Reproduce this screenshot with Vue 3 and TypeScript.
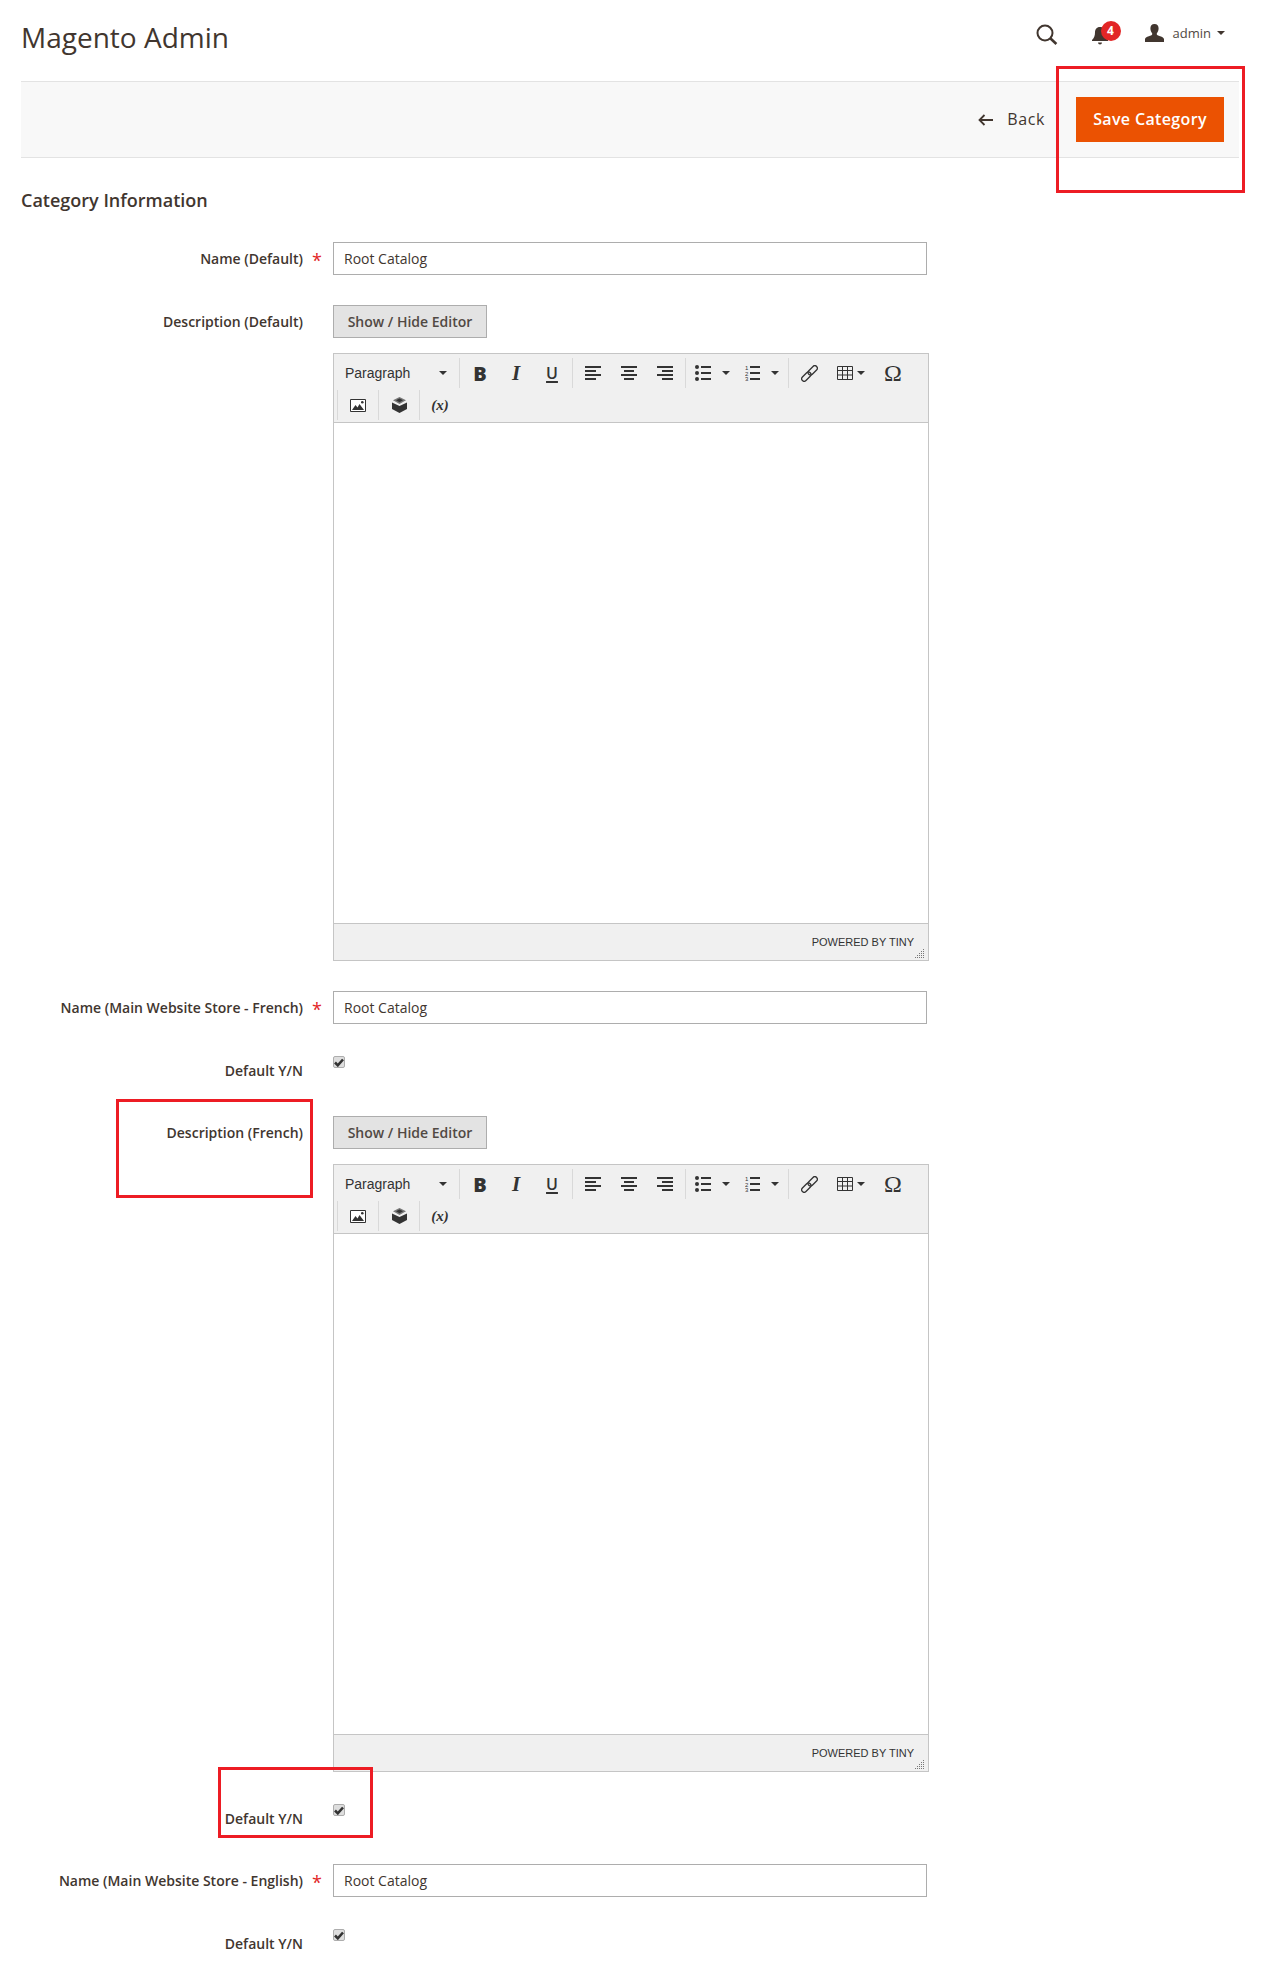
<script setup lang="ts">
interface Field {
  type: 'input' | 'editor' | 'check'
  label: string
  required?: boolean
}

const fields: Field[] = [
  { type: 'input', label: 'Name (Default)', required: true },
  { type: 'editor', label: 'Description (Default)' },
  { type: 'input', label: 'Name (Main Website Store - French)', required: true },
  { type: 'check', label: 'Default Y/N' },
  { type: 'editor', label: 'Description (French)' },
  { type: 'check', label: 'Default Y/N' },
  { type: 'input', label: 'Name (Main Website Store - English)', required: true },
  { type: 'check', label: 'Default Y/N' },
]
</script>

<template>
  <div class="page">
    <header class="top">
      <h1 class="title">Magento Admin</h1>
      <div class="top-actions">
        <svg class="ic-search" width="22" height="21" viewBox="0 0 22 21">
          <circle cx="9" cy="9" r="7.5" fill="none" stroke="#41362f" stroke-width="2" />
          <path d="M14 14l6.400 6" stroke="#41362f" stroke-width="2.600" fill="none" />
        </svg>
        <div class="bell">
          <svg width="18" height="19" viewBox="0 0 18 19">
            <path d="M9 1c-3.600 0-5 2.600-5 5.600 0 3.400-1 5.400-3 7.400v1h16v-1c-2-2-3-4-3-7.400C14 3.600 12.600 1 9 1z" fill="#41362f" />
            <path d="M7 16.500h4a2 2 0 0 1-4 0z" fill="#41362f" />
          </svg>
          <span class="badge">4</span>
        </div>
        <svg class="ic-user" width="19" height="18" viewBox="0 0 19 18">
          <path d="M9.500 0C6.700 0 5.300 2 5.400 4.600c.1 2 .8 3.500 1.700 4.700.3.500.2 1.300-.3 1.600C4.900 12 .6 12.600 0 15v3h19v-3c-.6-2.400-4.900-3-6.800-4.100-.5-.3-.6-1.100-.3-1.600.9-1.200 1.600-2.700 1.700-4.700C13.700 2 12.300 0 9.500 0z" fill="#41362f" />
        </svg>
        <span class="admin">admin</span>
        <span class="caret admin-caret"></span>
      </div>
    </header>

    <div class="toolbar">
      <svg width="15" height="12" viewBox="0 0 15 12">
        <path d="M6.500 1L1.500 6l5 5M1.500 6H15" fill="none" stroke="#41362f" stroke-width="1.800" />
      </svg>
      <span class="back">Back</span>
      <button class="save"><span>Save Category</span></button>
    </div>

    <h2 class="section">Category Information</h2>

    <div v-for="(f, i) in fields" :key="i" class="row" :class="'row-' + f.type">
      <label class="label">{{ f.label }}</label>
      <span class="req"><template v-if="f.required">*</template></span>

      <div v-if="f.type === 'input'" class="text-input">Root Catalog</div>

      <span v-else-if="f.type === 'check'" class="checkbox">
        <svg width="10" height="9" viewBox="0 0 10 9">
          <path d="M1 4.500l2.800 2.800L9 1.500" fill="none" stroke="#333" stroke-width="2.600" />
        </svg>
      </span>

      <div v-else class="editor-wrap">
        <button class="toggle">Show / Hide Editor</button>
        <div class="editor">
          <div class="mce-bar">
            <div class="mce-row">
              <div class="mce-format">
                <span>Paragraph</span>
                <span class="caret"></span>
              </div>
              <div class="mce-group">
                <span class="mce-btn g-bold">B</span>
                <span class="mce-btn g-ital">I</span>
                <span class="mce-btn g-under">U</span>
              </div>
              <div class="mce-group">
                <span class="mce-btn">
                  <svg width="16" height="14" viewBox="0 0 16 14"><path d="M0 1h16M0 5h11M0 9h16M0 13h11" stroke="#333" stroke-width="2" /></svg>
                </span>
                <span class="mce-btn">
                  <svg width="16" height="14" viewBox="0 0 16 14"><path d="M0 1h16M3 5h10M0 9h16M3 13h10" stroke="#333" stroke-width="2" /></svg>
                </span>
                <span class="mce-btn">
                  <svg width="16" height="14" viewBox="0 0 16 14"><path d="M0 1h16M5 5h11M0 9h16M5 13h11" stroke="#333" stroke-width="2" /></svg>
                </span>
              </div>
              <div class="mce-group">
                <span class="mce-split">
                  <svg width="16" height="16" viewBox="0 0 16 16">
                    <circle cx="2" cy="2" r="2" fill="#333" /><circle cx="2" cy="8" r="2" fill="#333" /><circle cx="2" cy="14" r="2" fill="#333" />
                    <path d="M6 2h10M6 8h10M6 14h10" stroke="#333" stroke-width="2" />
                  </svg>
                  <span class="caret"></span>
                </span>
                <span class="mce-split mce-num">
                  <svg class="num-ic" width="15" height="16" viewBox="0 0 15 16">
                    <path d="M5 2h10M5 8h10M5 14h10" stroke="#333" stroke-width="2" />
                    <text x="0" y="5">1</text>
                    <text x="0" y="11">2</text>
                    <text x="0" y="16">3</text>
                  </svg>
                  <span class="caret"></span>
                </span>
              </div>
              <div class="mce-group">
                <span class="mce-btn">
                  <svg width="17" height="17" viewBox="0 0 17 17">
                    <g transform="rotate(-45 8.500 8.500)" fill="none" stroke="#333" stroke-width="1.300">
                      <rect x="-1.500" y="6" width="11" height="5" rx="2.500" />
                      <rect x="7.500" y="6" width="11" height="5" rx="2.500" />
                    </g>
                  </svg>
                </span>
                <span class="mce-split mce-table">
                  <svg width="16" height="14" viewBox="0 0 16 14">
                    <path d="M.5.500h15v13H.5zM.5 4.500h15M.5 9h15M5.500.500v13M10.500.500v13" fill="none" stroke="#333" stroke-width="1" />
                  </svg>
                  <span class="caret"></span>
                </span>
                <span class="mce-btn g-omega">Ω</span>
              </div>
            </div>
            <div class="mce-row mce-row2">
              <div class="mce-group">
                <span class="mce-btn">
                  <svg width="16" height="13" viewBox="0 0 16 13">
                    <path d="M.5.500h15v12H.5z" fill="#fff" stroke="#333" />
                    <path d="M2 11l3.500-5 2 2.500L9.500 5 14 11z" fill="#333" />
                    <circle cx="12.300" cy="3.300" r="1.300" fill="#333" />
                  </svg>
                </span>
              </div>
              <div class="mce-group">
                <span class="mce-btn">
                  <svg width="15" height="16" viewBox="0 0 15 16">
                    <path d="M0 5.500l7.500 3.500L15 5.500V12l-7.500 4L0 12z" fill="#333" />
                    <path d="M7.500 0L14 3.200 7.500 7 1 3.200z" fill="#777" />
                    <path d="M4 3.200l3.500-1.700 3.500 1.700-3.500 2z" fill="#333" />
                  </svg>
                </span>
              </div>
              <div class="mce-group">
                <span class="mce-btn g-var">(x)</span>
              </div>
            </div>
          </div>
          <div class="mce-body"></div>
          <div class="mce-status">
            <span>POWERED BY TINY</span>
            <svg class="grip" width="10" height="10" viewBox="0 0 10 10">
              <path d="M8 1h1v1H8zM6 3h1v1H6zM8 3h1v1H8zM4 5h1v1H4zM6 5h1v1H6zM8 5h1v1H8zM2 7h1v1H2zM4 7h1v1H4zM6 7h1v1H6zM8 7h1v1H8zM0 9h1v1H0zM2 9h1v1H2zM4 9h1v1H4zM6 9h1v1H6zM8 9h1v1H8z" fill="#777" />
            </svg>
          </div>
        </div>
      </div>
    </div>

    <div class="mark mark-save"></div>
    <div class="mark mark-desc"></div>
    <div class="mark mark-check"></div>
  </div>
</template>

<style scoped>
.page {
  position: relative;
  width: 1267px;
  height: 1987px;
  overflow: hidden;
  background: #fff;
  color: #303030;
  font-family: "Open Sans", sans-serif;
  font-size: 14px;
}

.top {
  height: 81px;
  display: flex;
  justify-content: space-between;
  padding: 0 42px 0 21px;
  box-sizing: border-box;
}

.title {
  margin: 15px 0 0;
  font-size: 28px;
  line-height: 44px;
  font-weight: 400;
  color: #41362f;
}

.top-actions {
  display: flex;
  align-items: flex-start;
  padding-top: 24px;
}

.bell {
  position: relative;
  margin-left: 33px;
  padding-top: 2px;
  width: 18px;
  height: 19px;
}

.badge {
  position: absolute;
  left: 10px;
  top: -3px;
  width: 20px;
  height: 20px;
  border-radius: 50%;
  background: #e22626;
  color: #fff;
  font-size: 12px;
  font-weight: 700;
  line-height: 20px;
  text-align: center;
}

.ic-user {
  margin-left: 36px;
}

.admin {
  margin-left: 9px;
  font-size: 13px;
  line-height: 18px;
  color: #514943;
}

.caret {
  display: inline-block;
  width: 0;
  height: 0;
  border-left: 4px solid transparent;
  border-right: 4px solid transparent;
  border-top: 4px solid #41362f;
}

.admin-caret {
  margin: 7px 0 0 6px;
}

.toolbar {
  height: 77px;
  margin: 0 28px 0 21px;
  padding-right: 15px;
  box-sizing: border-box;
  background: #f8f8f8;
  border-top: 1px solid #e3e3e3;
  border-bottom: 1px solid #e3e3e3;
  display: flex;
  align-items: center;
  justify-content: flex-end;
}

.back {
  margin: 0 0 2px 14px;
  font-size: 16px;
  letter-spacing: .6px;
  color: #41362f;
}

.save {
  margin-left: 31px;
  width: 148px;
  height: 45px;
  border: 0;
  padding: 0 0 2px;
  background: #eb5202;
  color: #fff;
  font-family: inherit;
  font-size: 16px;
  font-weight: 600;
  letter-spacing: .35px;
}

.section {
  margin: 0;
  padding-top: 30px;
  height: 84px;
  box-sizing: border-box;
  padding-left: 21px;
  font-size: 18px;
  line-height: 25px;
  font-weight: 600;
  color: #41362f;
}

.row {
  display: flex;
  align-items: flex-start;
  margin-bottom: 30px;
}

.row-check {
  height: 32px;
}

.label {
  width: 303px;
  flex: none;
  text-align: right;
  font-weight: 600;
  line-height: 33px;
  color: #41362f;
}

.req {
  width: 30px;
  height: 33px;
  flex: none;
  padding-left: 9px;
  box-sizing: border-box;
  color: #e22626;
  font-size: 18px;
  line-height: 36px;
}

.text-input {
  width: 594px;
  height: 33px;
  box-sizing: border-box;
  border: 1px solid #adadad;
  padding-left: 10px;
  line-height: 31px;
  color: #41362f;
}

.checkbox {
  margin-top: 2px;
  width: 12px;
  height: 12px;
  box-sizing: border-box;
  border: 1px solid #adadad;
  border-radius: 2px;
  background: #dedede;
  display: flex;
  align-items: center;
  justify-content: center;
}

.editor-wrap {
  width: 596px;
}

.toggle {
  display: block;
  width: 154px;
  height: 33px;
  box-sizing: border-box;
  padding: 0;
  border: 1px solid #adadad;
  background: #e3e3e3;
  color: #514943;
  font-family: inherit;
  font-size: 14px;
  font-weight: 600;
}

.editor {
  margin-top: 15px;
  height: 608px;
  box-sizing: border-box;
  border: 1px solid #c5c5c5;
  display: flex;
  flex-direction: column;
  font-family: "Liberation Sans", Arial, sans-serif;
}

.mce-bar {
  background: #f0f0f0;
  border-bottom: 1px solid #c5c5c5;
  padding-top: 4px;
}

.mce-row {
  display: flex;
  height: 32px;
  color: #333;
}

.mce-row2 {
  padding-left: 3px;
}

.mce-format {
  width: 125px;
  height: 30px;
  box-sizing: border-box;
  padding: 0 12px 0 11px;
  display: flex;
  align-items: center;
  justify-content: space-between;
  font-size: 14px;
  color: #333;
}

.mce-group {
  display: flex;
  height: 30px;
  padding: 0 2px;
  border-left: 1px solid #d9d9d9;
}

.mce-btn {
  width: 36px;
  height: 30px;
  display: flex;
  align-items: center;
  justify-content: center;
}

.mce-split {
  width: 50px;
  height: 30px;
  display: flex;
  align-items: center;
  padding-left: 7px;
  box-sizing: border-box;
  gap: 11px;
}

.mce-num {
  width: 48px;
}

.mce-split .caret,
.mce-format .caret {
  border-top-color: #333;
}

.mce-table {
  width: 48px;
  padding-left: 10px;
  gap: 4px;
}

.num-ic text {
  font-family: "Liberation Sans", sans-serif;
  font-size: 6px;
  fill: #333;
}

.g-bold {
  font-family: "Open Sans", sans-serif;
  font-weight: 800;
  font-size: 20px;
}

.g-ital {
  font-family: "Liberation Serif", serif;
  font-weight: 700;
  font-style: italic;
  font-size: 21px;
}

.g-under {
  font-family: "Open Sans", sans-serif;
  font-size: 16px;
  font-weight: 600;
  text-decoration: underline;
  text-decoration-thickness: 2px;
  text-underline-offset: 2px;
}

.g-omega {
  font-family: "Liberation Serif", serif;
  font-size: 24px;
}

.g-var {
  font-family: "Liberation Serif", serif;
  font-style: italic;
  font-weight: 700;
  font-size: 15px;
}

.mce-body {
  flex: 1;
  background: #fff;
}

.mce-status {
  position: relative;
  height: 37px;
  box-sizing: border-box;
  background: #f0f0f0;
  border-top: 1px solid #c5c5c5;
  padding: 12px 14px 0 0;
  text-align: right;
  font-size: 11px;
  line-height: 13px;
  color: #333;
}

.grip {
  position: absolute;
  right: 3px;
  bottom: 2px;
}

.mark {
  position: absolute;
  box-sizing: border-box;
  border: 3px solid #ed1c24;
}

.mark-save {
  left: 1056px;
  top: 66px;
  width: 189px;
  height: 127px;
}

.mark-desc {
  left: 116px;
  top: 1099px;
  width: 197px;
  height: 99px;
}

.mark-check {
  left: 218px;
  top: 1767px;
  width: 155px;
  height: 71px;
}
</style>
